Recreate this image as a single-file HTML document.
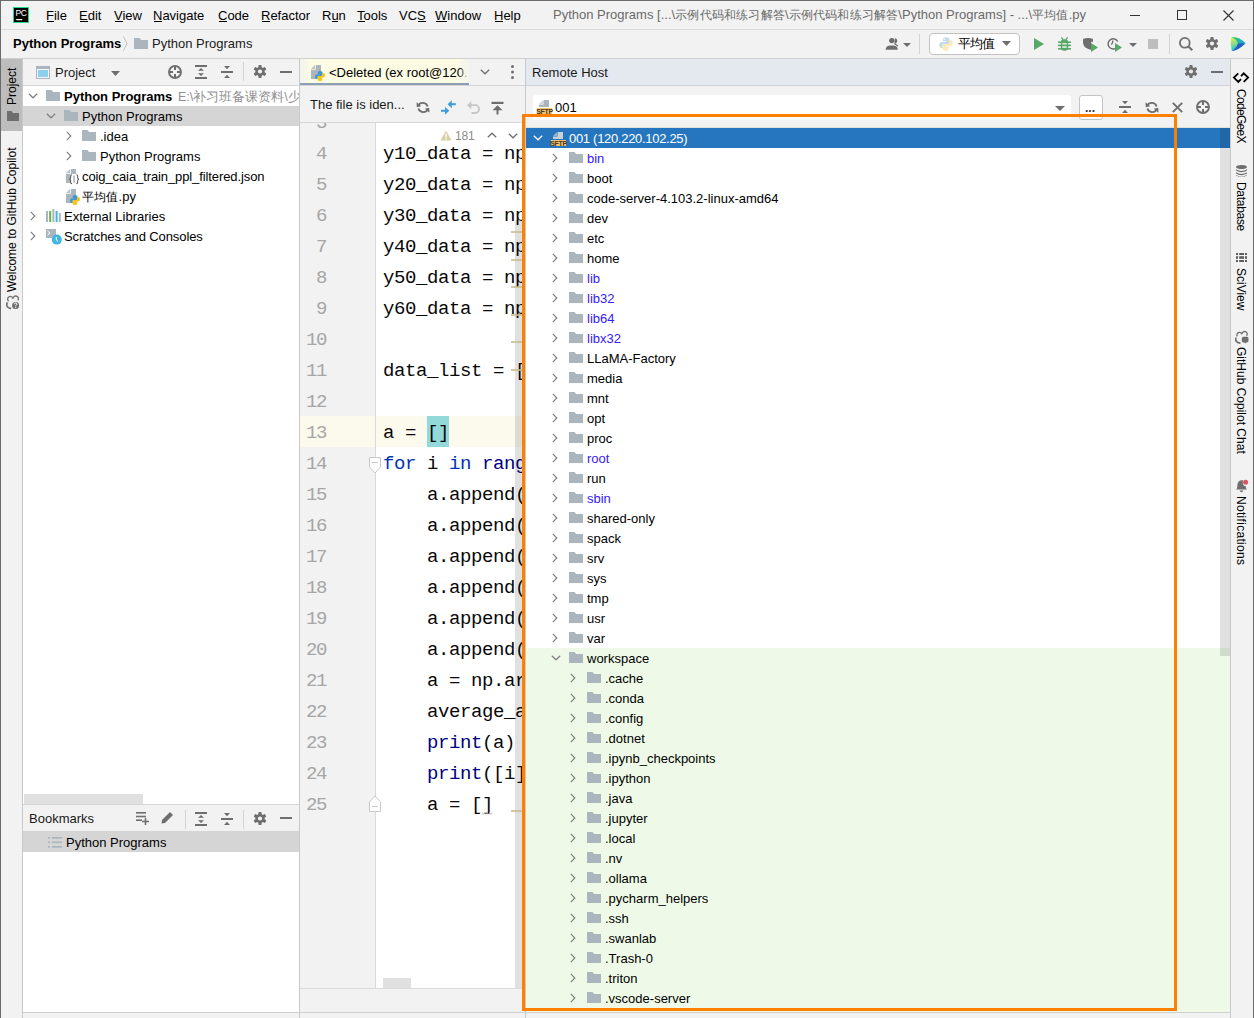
<!DOCTYPE html><html><head><meta charset="utf-8"><style>
*{margin:0;padding:0;box-sizing:border-box}
html,body{width:1254px;height:1018px;overflow:hidden;background:#f2f2f2}
body{position:relative;font-family:"Liberation Sans",sans-serif;font-size:13px;color:#000}
.t{position:absolute;white-space:nowrap}
.cj{font-size:12.2px;letter-spacing:0.2px}
svg{position:absolute;overflow:visible}
.code{position:absolute;font-family:"Liberation Mono",monospace;font-size:19px;letter-spacing:-0.4px;white-space:pre;height:31px;line-height:31px;color:#080808}
.ln{position:absolute;font-family:"Liberation Mono",monospace;font-size:19px;letter-spacing:-1.4px;white-space:pre;height:31px;line-height:31px;color:#a6a6a6;text-align:right;width:60px}
</style></head><body>
<div style="position:absolute;left:0px;top:0px;width:1254px;height:1px;background:#6b6b6b"></div>
<div style="position:absolute;left:0px;top:0px;width:1px;height:1018px;background:#6b6b6b"></div>
<div style="position:absolute;left:1253px;top:0px;width:1px;height:1018px;background:#6b6b6b"></div>
<div style="position:absolute;left:13px;top:7px;width:16px;height:16px;background:#21d789"></div>
<div style="position:absolute;left:14px;top:8px;width:14px;height:14px;background:#000"></div>
<svg style="position:absolute;left:15px;top:9px;" width="12" height="12" viewBox="0 0 12 12"><text x="0.6" y="7" font-size="8.6" fill="#fff" font-family="Liberation Sans" letter-spacing="-0.6">PC</text><rect x="1.2" y="10" width="6" height="1.2" fill="#fff"/></svg>
<div class="t" style="left:46px;top:5px;height:22px;line-height:22px;font-size:13px">File</div>
<div style="position:absolute;left:47px;top:21px;width:7px;height:1px;background:#000"></div>
<div class="t" style="left:79px;top:5px;height:22px;line-height:22px;font-size:13px">Edit</div>
<div style="position:absolute;left:80px;top:21px;width:8px;height:1px;background:#000"></div>
<div class="t" style="left:114px;top:5px;height:22px;line-height:22px;font-size:13px">View</div>
<div style="position:absolute;left:115px;top:21px;width:8px;height:1px;background:#000"></div>
<div class="t" style="left:153px;top:5px;height:22px;line-height:22px;font-size:13px">Navigate</div>
<div style="position:absolute;left:154px;top:21px;width:8px;height:1px;background:#000"></div>
<div class="t" style="left:218px;top:5px;height:22px;line-height:22px;font-size:13px">Code</div>
<div style="position:absolute;left:219px;top:21px;width:8px;height:1px;background:#000"></div>
<div class="t" style="left:261px;top:5px;height:22px;line-height:22px;font-size:13px">Refactor</div>
<div style="position:absolute;left:262px;top:21px;width:8px;height:1px;background:#000"></div>
<div class="t" style="left:322px;top:5px;height:22px;line-height:22px;font-size:13px">Run</div>
<div style="position:absolute;left:332px;top:21px;width:6px;height:1px;background:#000"></div>
<div class="t" style="left:357px;top:5px;height:22px;line-height:22px;font-size:13px">Tools</div>
<div style="position:absolute;left:358px;top:21px;width:7px;height:1px;background:#000"></div>
<div class="t" style="left:399px;top:5px;height:22px;line-height:22px;font-size:13px">VCS</div>
<div style="position:absolute;left:418px;top:21px;width:8px;height:1px;background:#000"></div>
<div class="t" style="left:435px;top:5px;height:22px;line-height:22px;font-size:13px">Window</div>
<div style="position:absolute;left:436px;top:21px;width:11px;height:1px;background:#000"></div>
<div class="t" style="left:494px;top:5px;height:22px;line-height:22px;font-size:13px">Help</div>
<div style="position:absolute;left:495px;top:21px;width:8px;height:1px;background:#000"></div>
<div class="t" style="left:553px;top:4px;height:22px;line-height:22px;color:#6a6a6a;font-size:13px">Python Programs [...\<span class="cj">示例代码和练习解答</span>\<span class="cj">示例代码和练习解答</span>\Python Programs] - ...\<span class="cj">平均值</span>.py</div>
<div style="position:absolute;left:1130px;top:15px;width:10px;height:1px;background:#333"></div>
<div style="position:absolute;left:1177px;top:10px;width:10px;height:10px;border:1px solid #333"></div>
<svg style="position:absolute;left:1223px;top:10px;" width="11" height="11" viewBox="0 0 11 11"><path d="M0.5 0.5L10.5 10.5M10.5 0.5L0.5 10.5" stroke="#333" stroke-width="1.1"/></svg>
<div style="position:absolute;left:1px;top:29px;width:1252px;height:1px;background:#dcdcdc"></div>
<div class="t" style="left:13px;top:33px;height:22px;line-height:22px;font-weight:bold;font-size:13px">Python Programs</div>
<svg style="position:absolute;left:123px;top:36px;" width="5" height="15" viewBox="0 0 5 15"><path d="M0.5 0.5L4 7.5L0.5 14.5" fill="none" stroke="#c4c4c4" stroke-width="1"/></svg>
<svg style="position:absolute;left:134px;top:38px;" width="14" height="11" viewBox="0 0 14 11"><path d="M0 0H5.5L7 2H14V11H0Z" fill="#aab5bd"/></svg>
<div class="t" style="left:152px;top:33px;height:22px;line-height:22px;font-size:13px;color:#1a1a1a">Python Programs</div>
<div style="position:absolute;left:1px;top:58px;width:1252px;height:1px;background:#d0d0d0"></div>
<svg style="position:absolute;left:885px;top:37px;" width="16" height="13" viewBox="0 0 16 13"><circle cx="6.8" cy="3.6" r="2.7" fill="#6e6e6e"/><path d="M6 1.5H7.6V5.5H6Z" fill="#6e6e6e"/><path d="M0.7 12.8C0.7 9.5 2.5 8.4 6.7 8.4S12.7 9.5 12.7 12.8Z" fill="#6e6e6e"/><path d="M10 1.2C11.5 1.2 12.2 2.4 12.2 3.8S11.6 6.4 10.3 6.6L13.5 8.8L12.5 9.5L9.3 7.2Z" fill="#6e6e6e"/></svg>
<svg style="position:absolute;left:903px;top:43px;" width="8" height="4" viewBox="0 0 8 4"><path d="M0 0H8L4 4Z" fill="#6e6e6e"/></svg>
<div style="position:absolute;left:919px;top:34px;width:1px;height:20px;background:#d4d4d4"></div>
<div style="position:absolute;left:929px;top:33px;width:91px;height:22px;background:#fff;border:1px solid #c2c2c2;border-radius:4px"></div>
<svg style="position:absolute;left:939px;top:37px;" width="14" height="14" viewBox="0 0 14 14"><path d="M7 0.3C4 0.3 4 1.6 4 2.8V4.3H7.3V4.9H2.6C1 4.9 0.2 6.2 0.2 7.9S1 11 2.6 11H3.8V9C3.8 7.8 4.8 6.9 6 6.9H9C10 6.9 10.6 6.2 10.6 5.3V2.8C10.6 1.3 9 0.3 7 0.3Z" fill="#c2dcef"/><path d="M7 13.7C10 13.7 10 12.4 10 11.2V9.7H6.7V9.1H11.4C13 9.1 13.8 7.8 13.8 6.1S13 3 11.4 3H10.2V5C10.2 6.2 9.2 7.1 8 7.1H5C4 7.1 3.4 7.8 3.4 8.7V11.2C3.4 12.7 5 13.7 7 13.7Z" fill="#fbeab8"/><circle cx="5.3" cy="2.2" r="0.7" fill="#fff"/><circle cx="8.7" cy="11.8" r="0.7" fill="#fff"/></svg>
<div class="t" style="left:958px;top:33px;height:22px;line-height:22px;font-size:13px;letter-spacing:-1px;color:#000">平均值</div>
<svg style="position:absolute;left:1002px;top:41px;" width="9" height="5" viewBox="0 0 9 5"><path d="M0 0H9L4.5 5Z" fill="#6e6e6e"/></svg>
<svg style="position:absolute;left:1034px;top:38px;" width="10" height="12" viewBox="0 0 10 12"><path d="M0 0L10 6L0 12Z" fill="#59a869"/></svg>
<svg style="position:absolute;left:1058px;top:37px;" width="13" height="14" viewBox="0 0 13 14"><path d="M3.4 0.4L5.2 2.8M9.6 0.4L7.8 2.8" stroke="#59a869" stroke-width="1.4"/><rect x="2.8" y="2.3" width="7.4" height="11.5" rx="3.3" fill="#59a869"/><rect x="0" y="4.4" width="13" height="1.6" fill="#59a869"/><rect x="0" y="7.6" width="13" height="1.6" fill="#59a869"/><rect x="0" y="11" width="13" height="1.6" fill="#59a869"/><rect x="4.3" y="6.1" width="4.4" height="1.4" fill="#f2f2f2"/><rect x="4.3" y="9.3" width="4.4" height="1.5" fill="#f2f2f2"/></svg>
<svg style="position:absolute;left:1083px;top:38px;" width="16" height="15" viewBox="0 0 16 15"><path d="M0 1Q5 -0.8 10 1V3.8H8.2V10.5L9 11.6Q6.5 12 4.2 10.6Q0 8.5 0 4Z" fill="#6e6e6e"/><path d="M8 5L15 9.5L8 14Z" fill="#59a869"/></svg>
<svg style="position:absolute;left:1106px;top:37px;" width="17" height="15" viewBox="0 0 17 15"><path d="M10.5 10.8A5.1 5.1 0 1 1 11.7 4.5" fill="none" stroke="#6e6e6e" stroke-width="1.5"/><path d="M6.8 3.5L6.6 5.5L5.4 7.6" fill="none" stroke="#6e6e6e" stroke-width="1.3"/><path d="M9 6L16 10.4L9 15Z" fill="#59a869"/></svg>
<svg style="position:absolute;left:1129px;top:43px;" width="8" height="4" viewBox="0 0 8 4"><path d="M0 0H8L4 4Z" fill="#6e6e6e"/></svg>
<div style="position:absolute;left:1148px;top:39px;width:10px;height:10px;background:#bdbdbd"></div>
<div style="position:absolute;left:1169px;top:34px;width:1px;height:20px;background:#d4d4d4"></div>
<svg style="position:absolute;left:1178px;top:36px;" width="16" height="16" viewBox="0 0 16 16"><circle cx="6.8" cy="6.8" r="4.9" fill="none" stroke="#6e6e6e" stroke-width="1.8"/><path d="M10.2 10.2L14.3 14.3" stroke="#6e6e6e" stroke-width="2"/></svg>
<svg style="position:absolute;left:1206px;top:37px;" width="12" height="13" viewBox="0 0 12 13"><g transform="translate(6,6.5)" fill="#6e6e6e"><rect x="-1.6" y="-6.5" width="3.2" height="4" rx="0.8" transform="rotate(0)"/><rect x="-1.6" y="-6.5" width="3.2" height="4" rx="0.8" transform="rotate(60)"/><rect x="-1.6" y="-6.5" width="3.2" height="4" rx="0.8" transform="rotate(120)"/><rect x="-1.6" y="-6.5" width="3.2" height="4" rx="0.8" transform="rotate(180)"/><rect x="-1.6" y="-6.5" width="3.2" height="4" rx="0.8" transform="rotate(240)"/><rect x="-1.6" y="-6.5" width="3.2" height="4" rx="0.8" transform="rotate(300)"/><circle r="4.6"/></g><circle cx="6" cy="6.5" r="2.1" fill="#f2f2f2"/></svg>
<svg style="position:absolute;left:1230px;top:36px;" width="16" height="16" viewBox="0 0 16 16"><defs><linearGradient id="lgA" x1="0" y1="0" x2="0.3" y2="1"><stop offset="0" stop-color="#f3f03c"/><stop offset="0.55" stop-color="#7fdc8c"/><stop offset="1" stop-color="#16b4e6"/></linearGradient><linearGradient id="lgB" x1="0" y1="0" x2="1" y2="1"><stop offset="0" stop-color="#22d27a"/><stop offset="1" stop-color="#1d9fe0"/></linearGradient></defs><path d="M1.2 1.2Q8 0 15.5 7.2Q8 14 1.8 15Q0 8 1.2 1.2Z" fill="url(#lgA)"/><path d="M1.8 1Q9 0.5 15.5 7.2L8 7.2Q6 3 1.8 1Z" fill="url(#lgB)"/><path d="M15.5 7.2Q9 14 1.8 15Q6.5 12 8 7.2Z" fill="#1f5fc4"/></svg>
<div style="position:absolute;left:1px;top:59px;width:21px;height:959px;background:#f2f2f2"></div>
<div style="position:absolute;left:1px;top:59px;width:21px;height:72px;background:#bdbdbd"></div>
<div style="position:absolute;left:22px;top:58px;width:1px;height:960px;background:#c9c9c9"></div>
<div class="t" style="left:5px;top:60px;height:15px;line-height:15px;font-size:12px;transform-origin:0 0;transform:translate(0px,45px) rotate(-90deg);">Project</div>
<svg style="position:absolute;left:7px;top:111px;" width="12" height="10" viewBox="0 0 12 10"><path d="M0 0H4.5L6 2H12V10H0Z" fill="#6e6e6e"/></svg>
<div class="t" style="left:5px;top:292px;height:15px;line-height:15px;font-size:12px;transform-origin:0 0;transform:rotate(-90deg);">Welcome to GitHub Copilot</div>
<svg style="position:absolute;left:6px;top:296px;" width="14" height="14" viewBox="0 0 14 14"><path d="M2.6 5.2A2.7 2.7 0 1 1 7 2.8A2.7 2.7 0 1 1 11.8 4.4" fill="none" stroke="#6e6e6e" stroke-width="1.3"/><path d="M1.3 6.4Q-0.3 10.2 2.5 11.6Q3.8 12.3 5.2 12.6" fill="none" stroke="#6e6e6e" stroke-width="1.6"/><circle cx="9.6" cy="9.4" r="3.5" fill="#6e6e6e"/><path d="M8.3 8.3Q8.4 7 9.6 7Q10.9 7 10.9 8.2Q10.9 9 9.7 9.5V10.3" fill="none" stroke="#fff" stroke-width="1"/><rect x="9.2" y="11" width="1" height="1" fill="#fff"/></svg>
<div style="position:absolute;left:23px;top:59px;width:276px;height:26px;background:#f2f2f2"></div>
<div style="position:absolute;left:23px;top:85px;width:276px;height:1px;background:#d6d6d6"></div>
<div style="position:absolute;left:23px;top:86px;width:276px;height:718px;background:#fff"></div>
<svg style="position:absolute;left:36px;top:66px;" width="14" height="13" viewBox="0 0 14 13"><rect x="0.5" y="0.5" width="13" height="12" fill="#f4f6f7" stroke="#aab5bd"/><rect x="0" y="0" width="14" height="3" fill="#aab5bd"/><rect x="2" y="4" width="10" height="7" fill="#8cd0ee"/></svg>
<div class="t" style="left:55px;top:63px;height:20px;line-height:20px;font-size:13px;color:#1a1a1a">Project</div>
<svg style="position:absolute;left:111px;top:71px;" width="9" height="5" viewBox="0 0 9 5"><path d="M0 0H9L4.5 5Z" fill="#6e6e6e"/></svg>
<svg style="position:absolute;left:168px;top:65px;" width="14" height="14" viewBox="0 0 14 14"><circle cx="7" cy="7" r="6" fill="none" stroke="#6e6e6e" stroke-width="1.9"/><path d="M7 1V5M7 9V13M1 7H5M9 7H13" stroke="#6e6e6e" stroke-width="2"/></svg>
<svg style="position:absolute;left:195px;top:65px;" width="12" height="14" viewBox="0 0 12 14"><rect x="0" y="0" width="12" height="2" fill="#6e6e6e"/><rect x="0" y="12" width="12" height="2" fill="#6e6e6e"/><path d="M3 5.8H9L6 3Z M3 8.2H9L6 11Z" fill="#6e6e6e"/></svg>
<svg style="position:absolute;left:221px;top:65px;" width="12" height="14" viewBox="0 0 12 14"><rect x="0" y="6" width="12" height="2" fill="#6e6e6e"/><path d="M3 1H9L6 4.2Z M3 13H9L6 9.8Z" fill="#6e6e6e"/></svg>
<div style="position:absolute;left:243px;top:62px;width:1px;height:19px;background:#d4d4d4"></div>
<svg style="position:absolute;left:254px;top:65px;" width="12" height="13" viewBox="0 0 12 13"><g transform="translate(6,6.5)" fill="#6e6e6e"><rect x="-1.6" y="-6.5" width="3.2" height="4" rx="0.8" transform="rotate(0)"/><rect x="-1.6" y="-6.5" width="3.2" height="4" rx="0.8" transform="rotate(60)"/><rect x="-1.6" y="-6.5" width="3.2" height="4" rx="0.8" transform="rotate(120)"/><rect x="-1.6" y="-6.5" width="3.2" height="4" rx="0.8" transform="rotate(180)"/><rect x="-1.6" y="-6.5" width="3.2" height="4" rx="0.8" transform="rotate(240)"/><rect x="-1.6" y="-6.5" width="3.2" height="4" rx="0.8" transform="rotate(300)"/><circle r="4.6"/></g><circle cx="6" cy="6.5" r="2.1" fill="#f2f2f2"/></svg>
<div style="position:absolute;left:280px;top:71px;width:12px;height:2px;background:#6e6e6e"></div>
<div style="position:absolute;left:299px;top:58px;width:1px;height:960px;background:#c9c9c9"></div>
<svg style="position:absolute;left:28px;top:93px;" width="10" height="6" viewBox="0 0 10 6"><path d="M0.8 0.8L5 4.8L9.2 0.8" fill="none" stroke="#808080" stroke-width="1.2"/></svg><svg style="position:absolute;left:46px;top:90px;" width="14" height="11" viewBox="0 0 14 11"><path d="M0 0H5.5L7 2H14V11H0Z" fill="#aab5bd"/></svg><div class="t" style="left:64px;top:87px;height:20px;line-height:20px;"><b>Python Programs</b></div>
<div class="t" style="left:178px;top:87px;height:20px;line-height:20px;width:121px;overflow:hidden;font-size:12.5px;color:#8f8f8f">E:\补习班备课资料\少儿编程</div>
<div style="position:absolute;left:23px;top:106px;width:276px;height:20px;background:#d5d5d5"></div><svg style="position:absolute;left:46px;top:113px;" width="10" height="6" viewBox="0 0 10 6"><path d="M0.8 0.8L5 4.8L9.2 0.8" fill="none" stroke="#808080" stroke-width="1.2"/></svg><svg style="position:absolute;left:64px;top:110px;" width="14" height="11" viewBox="0 0 14 11"><path d="M0 0H5.5L7 2H14V11H0Z" fill="#aab5bd"/></svg><div class="t" style="left:82px;top:107px;height:20px;line-height:20px;">Python Programs</div>
<svg style="position:absolute;left:66px;top:131px;" width="6" height="10" viewBox="0 0 6 10"><path d="M0.8 0.8L4.8 5L0.8 9.2" fill="none" stroke="#808080" stroke-width="1.2"/></svg><svg style="position:absolute;left:82px;top:130px;" width="14" height="11" viewBox="0 0 14 11"><path d="M0 0H5.5L7 2H14V11H0Z" fill="#aab5bd"/></svg><div class="t" style="left:100px;top:127px;height:20px;line-height:20px;">.idea</div>
<svg style="position:absolute;left:66px;top:151px;" width="6" height="10" viewBox="0 0 6 10"><path d="M0.8 0.8L4.8 5L0.8 9.2" fill="none" stroke="#808080" stroke-width="1.2"/></svg><svg style="position:absolute;left:82px;top:150px;" width="14" height="11" viewBox="0 0 14 11"><path d="M0 0H5.5L7 2H14V11H0Z" fill="#aab5bd"/></svg><div class="t" style="left:100px;top:147px;height:20px;line-height:20px;">Python Programs</div>
<div class="t" style="left:82px;top:167px;height:20px;line-height:20px;"><span style="letter-spacing:-0.1px">coig_caia_train_ppl_filtered.json</span></div>
<div class="t" style="left:82px;top:187px;height:20px;line-height:20px;"><span class="cj">平均值</span>.py</div>
<svg style="position:absolute;left:30px;top:211px;" width="6" height="10" viewBox="0 0 6 10"><path d="M0.8 0.8L4.8 5L0.8 9.2" fill="none" stroke="#808080" stroke-width="1.2"/></svg><div class="t" style="left:64px;top:207px;height:20px;line-height:20px;">External Libraries</div>
<svg style="position:absolute;left:30px;top:231px;" width="6" height="10" viewBox="0 0 6 10"><path d="M0.8 0.8L4.8 5L0.8 9.2" fill="none" stroke="#808080" stroke-width="1.2"/></svg><div class="t" style="left:64px;top:227px;height:20px;line-height:20px;"><span style="letter-spacing:-0.1px">Scratches and Consoles</span></div>
<svg style="position:absolute;left:66px;top:169px;" width="10" height="14" viewBox="0 0 10 14"><path d="M4.8 0H10V14H0V4.8H4.8Z" fill="#aab5bd"/><path d="M0 4L4 0V4Z" fill="#b9c3c9"/></svg>
<svg style="position:absolute;left:69px;top:174px;" width="11" height="11" viewBox="0 0 11 11"><rect x="1" y="0" width="8.5" height="10.5" fill="#fff"/><rect x="4.3" y="1.5" width="1.6" height="7" fill="#aab5bd"/><path d="M3 0.8Q1.6 0.8 1.6 2.2V3.8Q1.6 5 0.3 5.2Q1.6 5.4 1.6 6.6V8.2Q1.6 9.6 3 9.6M7.3 0.8Q8.7 0.8 8.7 2.2V3.8Q8.7 5 10 5.2Q8.7 5.4 8.7 6.6V8.2Q8.7 9.6 7.3 9.6" fill="none" stroke="#5e5e5e" stroke-width="1.1"/></svg>
<svg style="position:absolute;left:66px;top:189px;" width="10" height="14" viewBox="0 0 10 14"><path d="M4.8 0H10V14H0V4.8H4.8Z" fill="#aab5bd"/><path d="M0 4L4 0V4Z" fill="#b9c3c9"/></svg>
<svg style="position:absolute;left:70px;top:195px;" width="10" height="10" viewBox="0 0 10 10"><g transform="scale(1.0)"><path d="M5 0C2.8 0 2.8 1 2.8 2V3.2H5.2V3.6H1.8C0.7 3.6 0 4.5 0 5.8S0.7 8 1.8 8H2.8V6.5C2.8 5.6 3.5 5 4.3 5H6.5C7.2 5 7.6 4.5 7.6 3.9V2C7.6 0.9 6.5 0 5 0Z" fill="#3b98d4"/><path d="M5 10C7.2 10 7.2 9 7.2 8V6.8H4.8V6.4H8.2C9.3 6.4 10 5.5 10 4.2S9.3 2 8.2 2H7.2V3.5C7.2 4.4 6.5 5 5.7 5H3.5C2.8 5 2.4 5.5 2.4 6.1V8C2.4 9.1 3.5 10 5 10Z" fill="#f5c518"/></g></svg>
<svg style="position:absolute;left:46px;top:209px;" width="15" height="13" viewBox="0 0 15 13"><rect x="0" y="2" width="2" height="11" fill="#aab5bd"/><rect x="3.2" y="2" width="2" height="11" fill="#62b543"/><rect x="6.4" y="0" width="2" height="13" fill="#aab5bd"/><rect x="9.6" y="2" width="2" height="11" fill="#40b6e0"/><rect x="12.8" y="4" width="2" height="9" fill="#aab5bd"/></svg>
<svg style="position:absolute;left:46px;top:229px;" width="16" height="16" viewBox="0 0 16 16"><rect x="0" y="0" width="10" height="9" fill="#aab5bd"/><path d="M1.5 2L4 4L1.5 6" fill="none" stroke="#fff" stroke-width="1"/><circle cx="10.8" cy="10.6" r="5" fill="#40b6e0"/><path d="M10.3 8V11L12 12.5" fill="none" stroke="#fff" stroke-width="1"/></svg>
<div style="position:absolute;left:24px;top:794px;width:119px;height:10px;background:#e0e0e0"></div>
<div style="position:absolute;left:23px;top:804px;width:276px;height:1px;background:#d6d6d6"></div>
<div style="position:absolute;left:23px;top:805px;width:276px;height:26px;background:#f2f2f2"></div>
<div class="t" style="left:29px;top:809px;height:20px;line-height:20px;font-size:13px;color:#1a1a1a">Bookmarks</div>
<svg style="position:absolute;left:136px;top:812px;" width="14" height="14" viewBox="0 0 14 14"><rect x="0" y="0" width="10" height="1.6" fill="#6e6e6e"/><rect x="0" y="3.7" width="10" height="1.6" fill="#6e6e6e"/><rect x="0" y="7.4" width="6" height="1.6" fill="#6e6e6e"/><path d="M9.5 6V13M6 9.5H13" stroke="#6e6e6e" stroke-width="1.6"/></svg>
<svg style="position:absolute;left:161px;top:811px;" width="13" height="13" viewBox="0 0 13 13"><path d="M0.5 12.5L1 9L9 1L12 4L4 12Z" fill="#6e6e6e"/></svg>
<div style="position:absolute;left:185px;top:810px;width:1px;height:19px;background:#d4d4d4"></div>
<svg style="position:absolute;left:195px;top:812px;" width="12" height="14" viewBox="0 0 12 14"><rect x="0" y="0" width="12" height="2" fill="#6e6e6e"/><rect x="0" y="12" width="12" height="2" fill="#6e6e6e"/><path d="M3 5.8H9L6 3Z M3 8.2H9L6 11Z" fill="#6e6e6e"/></svg>
<svg style="position:absolute;left:221px;top:812px;" width="12" height="14" viewBox="0 0 12 14"><rect x="0" y="6" width="12" height="2" fill="#6e6e6e"/><path d="M3 1H9L6 4.2Z M3 13H9L6 9.8Z" fill="#6e6e6e"/></svg>
<div style="position:absolute;left:243px;top:810px;width:1px;height:19px;background:#d4d4d4"></div>
<svg style="position:absolute;left:254px;top:812px;" width="12" height="13" viewBox="0 0 12 13"><g transform="translate(6,6.5)" fill="#6e6e6e"><rect x="-1.6" y="-6.5" width="3.2" height="4" rx="0.8" transform="rotate(0)"/><rect x="-1.6" y="-6.5" width="3.2" height="4" rx="0.8" transform="rotate(60)"/><rect x="-1.6" y="-6.5" width="3.2" height="4" rx="0.8" transform="rotate(120)"/><rect x="-1.6" y="-6.5" width="3.2" height="4" rx="0.8" transform="rotate(180)"/><rect x="-1.6" y="-6.5" width="3.2" height="4" rx="0.8" transform="rotate(240)"/><rect x="-1.6" y="-6.5" width="3.2" height="4" rx="0.8" transform="rotate(300)"/><circle r="4.6"/></g><circle cx="6" cy="6.5" r="2.1" fill="#f2f2f2"/></svg>
<div style="position:absolute;left:280px;top:817px;width:12px;height:2px;background:#6e6e6e"></div>
<div style="position:absolute;left:23px;top:831px;width:276px;height:1px;background:#ececec"></div>
<div style="position:absolute;left:23px;top:832px;width:276px;height:180px;background:#fff"></div>
<div style="position:absolute;left:23px;top:831px;width:276px;height:21px;background:#d5d5d5"></div>
<svg style="position:absolute;left:48px;top:837px;" width="14" height="11" viewBox="0 0 14 11"><g fill="#aab5bd"><rect x="0" y="0" width="2" height="1.6"/><rect x="0" y="4.5" width="2" height="1.6"/><rect x="0" y="9" width="2" height="1.6"/><rect x="4" y="0" width="10" height="1.6"/><rect x="4" y="4.5" width="10" height="1.6"/><rect x="4" y="9" width="10" height="1.6"/></g></svg>
<div class="t" style="left:66px;top:833px;height:20px;line-height:20px;font-size:13px">Python Programs</div>
<div style="position:absolute;left:23px;top:1012px;width:1230px;height:1px;background:#d0d0d0"></div>
<div style="position:absolute;left:300px;top:59px;width:225px;height:26px;background:#f2f2f2"></div>
<div style="position:absolute;left:300px;top:59px;width:169px;height:24px;background:linear-gradient(to right,#f2f2f2 0px,#fcfbe3 10px,#fcfbe3 158px,#f2f2f2 169px)"></div>
<div style="position:absolute;left:300px;top:83px;width:169px;height:2px;background:#8d9db3"></div>
<div style="position:absolute;left:300px;top:85px;width:225px;height:1px;background:#d6d6d6"></div>
<svg style="position:absolute;left:311px;top:65px;" width="10" height="14" viewBox="0 0 10 14"><path d="M4.8 0H10V14H0V4.8H4.8Z" fill="#aab5bd"/><path d="M0 4L4 0V4Z" fill="#b9c3c9"/></svg>
<svg style="position:absolute;left:315px;top:71px;" width="10" height="10" viewBox="0 0 10 10"><g transform="scale(1.0)"><path d="M5 0C2.8 0 2.8 1 2.8 2V3.2H5.2V3.6H1.8C0.7 3.6 0 4.5 0 5.8S0.7 8 1.8 8H2.8V6.5C2.8 5.6 3.5 5 4.3 5H6.5C7.2 5 7.6 4.5 7.6 3.9V2C7.6 0.9 6.5 0 5 0Z" fill="#3b98d4"/><path d="M5 10C7.2 10 7.2 9 7.2 8V6.8H4.8V6.4H8.2C9.3 6.4 10 5.5 10 4.2S9.3 2 8.2 2H7.2V3.5C7.2 4.4 6.5 5 5.7 5H3.5C2.8 5 2.4 5.5 2.4 6.1V8C2.4 9.1 3.5 10 5 10Z" fill="#f5c518"/></g></svg>
<div class="t" style="left:329px;top:63px;height:20px;line-height:20px;width:139px;overflow:hidden;font-size:13px;color:#000">&lt;Deleted (ex root@120.220.102.25)</div>
<div style="position:absolute;left:459px;top:63px;width:10px;height:20px;background:linear-gradient(to right,rgba(250,249,228,0),#f6f6e9 100%)"></div>
<svg style="position:absolute;left:480px;top:69px;" width="10" height="6" viewBox="0 0 10 6"><path d="M0.8 0.8L5 4.8L9.2 0.8" fill="none" stroke="#6e6e6e" stroke-width="1.3"/></svg>
<svg style="position:absolute;left:511px;top:65px;" width="3" height="14" viewBox="0 0 3 14"><circle cx="1.5" cy="1.5" r="1.5" fill="#6e6e6e"/><circle cx="1.5" cy="7" r="1.5" fill="#6e6e6e"/><circle cx="1.5" cy="12.5" r="1.5" fill="#6e6e6e"/></svg>
<div style="position:absolute;left:300px;top:86px;width:225px;height:36px;background:#f2f2f2"></div>
<div class="t" style="left:310px;top:95px;height:20px;line-height:20px;font-size:13px;color:#1a1a1a">The file is iden...</div>
<svg style="position:absolute;left:416px;top:101px;" width="14" height="13" viewBox="0 0 14 13"><path d="M2.3 4.6A5 5 0 0 1 11.6 5.4M11.7 8.4A5 5 0 0 1 2.4 7.6" fill="none" stroke="#6e6e6e" stroke-width="1.8"/><path d="M0.5 1.2L0.8 6.3L5.2 5.2Z M13.5 11.8L13.2 6.7L8.8 7.8Z" fill="#6e6e6e"/></svg>
<svg style="position:absolute;left:441px;top:100px;" width="15" height="15" viewBox="0 0 15 15"><g fill="#3f9ddb"><rect x="0" y="9.8" width="5" height="2"/><path d="M4 6.8L8.3 10.8L4 14.8Z"/><rect x="9.8" y="3.2" width="5" height="2"/><path d="M10.8 0.2L6.5 4.2L10.8 8.2Z"/></g></svg>
<svg style="position:absolute;left:467px;top:101px;" width="14" height="13" viewBox="0 0 14 13"><path d="M3.5 4.2H8.2A3.9 3.9 0 0 1 8.2 12H4.5" fill="none" stroke="#c6c6c6" stroke-width="1.8"/><path d="M0 4.2L4.3 0.2V8.2Z" fill="#c6c6c6"/></svg>
<svg style="position:absolute;left:491px;top:101px;" width="13" height="14" viewBox="0 0 13 14"><rect x="0.5" y="0.8" width="12" height="2.2" fill="#6e6e6e"/><rect x="5.5" y="7" width="2" height="6.5" fill="#6e6e6e"/><path d="M1.5 9.3L6.5 4.3L11.5 9.3Z" fill="#6e6e6e"/></svg>
<div style="position:absolute;left:300px;top:122px;width:225px;height:1px;background:#d6d6d6"></div>
<div style="position:absolute;left:300px;top:123px;width:76px;height:865px;background:#f2f2f2"></div>
<div style="position:absolute;left:375px;top:123px;width:1px;height:865px;background:#d9d9d9"></div>
<div style="position:absolute;left:376px;top:123px;width:146px;height:865px;background:#fff"></div>
<div style="position:absolute;left:300px;top:988px;width:222px;height:24px;background:#f2f2f2"></div>
<div style="position:absolute;left:300px;top:416px;width:76px;height:31px;background:#fcfaed"></div>
<div style="position:absolute;left:376px;top:416px;width:146px;height:31px;background:#fcfaed"></div>
<div style="position:absolute;left:427px;top:416px;width:22px;height:31px;background:#93d9d9"></div>
<div style="position:absolute;left:375px;top:416px;width:1px;height:31px;background:#d9d9d9"></div>
<div style="position:absolute;left:300px;top:123px;width:222px;height:865px;overflow:hidden"><div style="position:absolute;left:-300px;top:-123px;width:1254px;height:1018px"><div class="ln" style="left:266px;top:107.5px;">3</div><div class="code" style="left:383px;top:107.5px;"></div><div class="ln" style="left:266px;top:138.5px;">4</div><div class="code" style="left:383px;top:138.5px;">y10_data = np.array</div><div class="ln" style="left:266px;top:169.5px;">5</div><div class="code" style="left:383px;top:169.5px;">y20_data = np.array</div><div class="ln" style="left:266px;top:200.5px;">6</div><div class="code" style="left:383px;top:200.5px;">y30_data = np.array</div><div class="ln" style="left:266px;top:231.5px;">7</div><div class="code" style="left:383px;top:231.5px;">y40_data = np.array</div><div class="ln" style="left:266px;top:262.5px;">8</div><div class="code" style="left:383px;top:262.5px;">y50_data = np.array</div><div class="ln" style="left:266px;top:293.5px;">9</div><div class="code" style="left:383px;top:293.5px;">y60_data = np.array</div><div class="ln" style="left:266px;top:324.5px;">10</div><div class="code" style="left:383px;top:324.5px;"></div><div class="ln" style="left:266px;top:355.5px;">11</div><div class="code" style="left:383px;top:355.5px;">data_list = [y10</div><div class="ln" style="left:266px;top:386.5px;">12</div><div class="code" style="left:383px;top:386.5px;"></div><div class="ln" style="left:266px;top:417.5px;">13</div><div class="code" style="left:383px;top:417.5px;">a = []</div><div class="ln" style="left:266px;top:448.5px;">14</div><div class="code" style="left:383px;top:448.5px;"><span style="color:#0033b3">for</span> i <span style="color:#0033b3">in</span> <span style="color:#000080">range</span>(</div><div class="ln" style="left:266px;top:479.5px;">15</div><div class="code" style="left:383px;top:479.5px;">    a.append(</div><div class="ln" style="left:266px;top:510.5px;">16</div><div class="code" style="left:383px;top:510.5px;">    a.append(</div><div class="ln" style="left:266px;top:541.5px;">17</div><div class="code" style="left:383px;top:541.5px;">    a.append(</div><div class="ln" style="left:266px;top:572.5px;">18</div><div class="code" style="left:383px;top:572.5px;">    a.append(</div><div class="ln" style="left:266px;top:603.5px;">19</div><div class="code" style="left:383px;top:603.5px;">    a.append(</div><div class="ln" style="left:266px;top:634.5px;">20</div><div class="code" style="left:383px;top:634.5px;">    a.append(</div><div class="ln" style="left:266px;top:665.5px;">21</div><div class="code" style="left:383px;top:665.5px;">    a = np.array</div><div class="ln" style="left:266px;top:696.5px;">22</div><div class="code" style="left:383px;top:696.5px;">    average_a</div><div class="ln" style="left:266px;top:727.5px;">23</div><div class="code" style="left:383px;top:727.5px;">    <span style="color:#000080">print</span>(a)</div><div class="ln" style="left:266px;top:758.5px;">24</div><div class="code" style="left:383px;top:758.5px;">    <span style="color:#000080">print</span>([i]</div><div class="ln" style="left:266px;top:789.5px;">25</div><div class="code" style="left:383px;top:789.5px;">    a = []</div></div></div>
<div style="position:absolute;left:376px;top:125px;width:140px;height:20px;background:#fff"></div>
<svg style="position:absolute;left:440px;top:130px;" width="12" height="11" viewBox="0 0 12 11"><path d="M6 0.5L11.5 10.5H0.5Z" fill="#d9cfa5"/><rect x="5.3" y="3.5" width="1.4" height="4" fill="#fff"/><rect x="5.3" y="8.3" width="1.4" height="1.4" fill="#fff"/></svg>
<div class="t" style="left:455px;top:126px;height:20px;line-height:20px;font-size:12px;color:#8a8a8a;letter-spacing:-0.2px">181</div>
<svg style="position:absolute;left:487px;top:132px;" width="10" height="6" viewBox="0 0 10 6"><path d="M0.8 5.2L5 1.2L9.2 5.2" fill="none" stroke="#6e6e6e" stroke-width="1.2"/></svg>
<svg style="position:absolute;left:508px;top:133px;" width="10" height="6" viewBox="0 0 10 6"><path d="M0.8 0.8L5 4.8L9.2 0.8" fill="none" stroke="#6e6e6e" stroke-width="1.2"/></svg>
<svg style="position:absolute;left:369px;top:457px;" width="12" height="17" viewBox="0 0 12 17"><path d="M0.5 0.5H11.5V10L6 16L0.5 10Z" fill="#fff" stroke="#c9c9c9"/><path d="M3 5.5H9" stroke="#c9c9c9"/></svg>
<svg style="position:absolute;left:369px;top:795px;" width="12" height="17" viewBox="0 0 12 17"><path d="M0.5 16.5H11.5V7L6 1L0.5 7Z" fill="#fff" stroke="#c9c9c9"/><path d="M3 11.5H9" stroke="#c9c9c9"/></svg>
<div style="position:absolute;left:515px;top:220px;width:7px;height:768px;background:rgba(0,0,0,0.12)"></div>
<div style="position:absolute;left:511px;top:231px;width:11px;height:2px;background:rgba(200,188,140,0.8)"></div>
<div style="position:absolute;left:511px;top:259px;width:11px;height:2px;background:rgba(200,188,140,0.8)"></div>
<div style="position:absolute;left:511px;top:286px;width:11px;height:2px;background:rgba(200,188,140,0.8)"></div>
<div style="position:absolute;left:511px;top:314px;width:11px;height:2px;background:rgba(200,188,140,0.8)"></div>
<div style="position:absolute;left:511px;top:341px;width:11px;height:2px;background:rgba(200,188,140,0.8)"></div>
<div style="position:absolute;left:511px;top:369px;width:11px;height:2px;background:rgba(200,188,140,0.8)"></div>
<div style="position:absolute;left:383px;top:978px;width:28px;height:10px;background:#e0e0e0"></div>
<div style="position:absolute;left:300px;top:988px;width:222px;height:1px;background:#dadada"></div>
<svg style="position:absolute;left:482px;top:812px;" width="10" height="3" viewBox="0 0 10 3"><path d="M0 0.5L1.25 2.5L2.5 0.5L3.75 2.5L5 0.5L6.25 2.5L7.5 0.5L8.75 2.5L10 0.5" fill="none" stroke="#b8b8b8" stroke-width="0.8"/></svg>
<div style="position:absolute;left:511px;top:810px;width:11px;height:2px;background:rgba(200,188,140,0.8)"></div>
<div style="position:absolute;left:525px;top:58px;width:1px;height:960px;background:#c9c9c9"></div>
<div style="position:absolute;left:526px;top:59px;width:704px;height:26px;background:#e4e8ef"></div>
<div style="position:absolute;left:526px;top:85px;width:704px;height:1px;background:#d0d3d9"></div>
<div class="t" style="left:532px;top:63px;height:20px;line-height:20px;font-size:13px;color:#1a1a1a">Remote Host</div>
<svg style="position:absolute;left:1185px;top:65px;" width="12" height="13" viewBox="0 0 12 13"><g transform="translate(6,6.5)" fill="#6e6e6e"><rect x="-1.6" y="-6.5" width="3.2" height="4" rx="0.8" transform="rotate(0)"/><rect x="-1.6" y="-6.5" width="3.2" height="4" rx="0.8" transform="rotate(60)"/><rect x="-1.6" y="-6.5" width="3.2" height="4" rx="0.8" transform="rotate(120)"/><rect x="-1.6" y="-6.5" width="3.2" height="4" rx="0.8" transform="rotate(180)"/><rect x="-1.6" y="-6.5" width="3.2" height="4" rx="0.8" transform="rotate(240)"/><rect x="-1.6" y="-6.5" width="3.2" height="4" rx="0.8" transform="rotate(300)"/><circle r="4.6"/></g><circle cx="6" cy="6.5" r="2.1" fill="#e4e8ef"/></svg>
<div style="position:absolute;left:1211px;top:71px;width:12px;height:2px;background:#6e6e6e"></div>
<div style="position:absolute;left:526px;top:86px;width:704px;height:42px;background:#f2f2f2"></div>
<div style="position:absolute;left:533px;top:95px;width:538px;height:25px;background:#fff;border-radius:3px"></div>
<svg style="position:absolute;left:537px;top:99px;" width="16" height="15" viewBox="0 0 16 15"><path d="M6.5 1H12V8H2V5.5H6.5Z" fill="#aab5bd"/><path d="M2 5L6 1V5Z" fill="#cdd5da"/><rect x="0" y="9" width="15" height="6" fill="#f2c06e"/><text x="7.5" y="14.6" font-size="7" text-anchor="middle" fill="#4a3a20" font-family="Liberation Sans" font-weight="bold" letter-spacing="-0.3">SFTP</text></svg>
<div class="t" style="left:555px;top:98px;height:20px;line-height:20px;font-size:13px">001</div>
<svg style="position:absolute;left:1055px;top:106px;" width="10" height="5" viewBox="0 0 10 5"><path d="M0 0H10L5 5Z" fill="#6e6e6e"/></svg>
<div style="position:absolute;left:1079px;top:95px;width:24px;height:25px;background:#fff;border:1px solid #c4c4c4;border-radius:3px"></div>
<div class="t" style="left:1085px;top:98px;height:20px;line-height:20px;font-size:12px;font-weight:bold;color:#333">...</div>
<svg style="position:absolute;left:1119px;top:100px;" width="12" height="14" viewBox="0 0 12 14"><rect x="0" y="6" width="12" height="2" fill="#6e6e6e"/><path d="M3 1H9L6 4.2Z M3 13H9L6 9.8Z" fill="#6e6e6e"/></svg>
<svg style="position:absolute;left:1145px;top:101px;" width="14" height="13" viewBox="0 0 14 13"><path d="M2.3 4.6A5 5 0 0 1 11.6 5.4M11.7 8.4A5 5 0 0 1 2.4 7.6" fill="none" stroke="#6e6e6e" stroke-width="1.8"/><path d="M0.5 1.2L0.8 6.3L5.2 5.2Z M13.5 11.8L13.2 6.7L8.8 7.8Z" fill="#6e6e6e"/></svg>
<svg style="position:absolute;left:1172px;top:102px;" width="11" height="11" viewBox="0 0 11 11"><path d="M0.8 0.8L10.2 10.2M10.2 0.8L0.8 10.2" stroke="#6e6e6e" stroke-width="1.9"/></svg>
<svg style="position:absolute;left:1196px;top:100px;" width="14" height="14" viewBox="0 0 14 14"><circle cx="7" cy="7" r="6" fill="none" stroke="#6e6e6e" stroke-width="1.9"/><path d="M7 1V5M7 9V13M1 7H5M9 7H13" stroke="#6e6e6e" stroke-width="2"/></svg>
<div style="position:absolute;left:1230px;top:58px;width:1px;height:960px;background:#c9c9c9"></div>
<div style="position:absolute;left:526px;top:128px;width:704px;height:884px;background:#fff"></div>
<div style="position:absolute;left:526px;top:648px;width:704px;height:364px;background:#eefae7"></div>
<div style="position:absolute;left:526px;top:127px;width:704px;height:1px;background:#e2dfdb"></div>
<div style="position:absolute;left:526px;top:128px;width:704px;height:20px;background:#2675bf"></div>
<svg style="position:absolute;left:533px;top:135px;" width="10" height="6" viewBox="0 0 10 6"><path d="M0.8 0.8L5 4.8L9.2 0.8" fill="none" stroke="#ffffff" stroke-width="1.2"/></svg>
<svg style="position:absolute;left:551px;top:131px;" width="16" height="15" viewBox="0 0 16 15"><path d="M6.5 1H12V8H2V5.5H6.5Z" fill="#c9d1d7"/><path d="M2 5L6 1V5Z" fill="#9fb3c6"/><rect x="0" y="9" width="15" height="6" fill="#f2c06e"/><text x="7.5" y="14.6" font-size="7" text-anchor="middle" fill="#4a3a20" font-family="Liberation Sans" font-weight="bold" letter-spacing="-0.3">SFTP</text></svg>
<div class="t" style="left:569px;top:129px;height:20px;line-height:20px;font-size:13px;color:#fff;letter-spacing:-0.3px">001 (120.220.102.25)</div>
<svg style="position:absolute;left:552px;top:153px;" width="6" height="10" viewBox="0 0 6 10"><path d="M0.8 0.8L4.8 5L0.8 9.2" fill="none" stroke="#808080" stroke-width="1.2"/></svg>
<svg style="position:absolute;left:569px;top:152px;" width="14" height="11" viewBox="0 0 14 11"><path d="M0 0H5.5L7 2H14V11H0Z" fill="#aab5bd"/></svg>
<div class="t" style="left:587px;top:149px;height:20px;line-height:20px;font-size:13px;color:#3420f8">bin</div>
<svg style="position:absolute;left:552px;top:173px;" width="6" height="10" viewBox="0 0 6 10"><path d="M0.8 0.8L4.8 5L0.8 9.2" fill="none" stroke="#808080" stroke-width="1.2"/></svg>
<svg style="position:absolute;left:569px;top:172px;" width="14" height="11" viewBox="0 0 14 11"><path d="M0 0H5.5L7 2H14V11H0Z" fill="#aab5bd"/></svg>
<div class="t" style="left:587px;top:169px;height:20px;line-height:20px;font-size:13px;color:#000">boot</div>
<svg style="position:absolute;left:552px;top:193px;" width="6" height="10" viewBox="0 0 6 10"><path d="M0.8 0.8L4.8 5L0.8 9.2" fill="none" stroke="#808080" stroke-width="1.2"/></svg>
<svg style="position:absolute;left:569px;top:192px;" width="14" height="11" viewBox="0 0 14 11"><path d="M0 0H5.5L7 2H14V11H0Z" fill="#aab5bd"/></svg>
<div class="t" style="left:587px;top:189px;height:20px;line-height:20px;font-size:13px;color:#000">code-server-4.103.2-linux-amd64</div>
<svg style="position:absolute;left:552px;top:213px;" width="6" height="10" viewBox="0 0 6 10"><path d="M0.8 0.8L4.8 5L0.8 9.2" fill="none" stroke="#808080" stroke-width="1.2"/></svg>
<svg style="position:absolute;left:569px;top:212px;" width="14" height="11" viewBox="0 0 14 11"><path d="M0 0H5.5L7 2H14V11H0Z" fill="#aab5bd"/></svg>
<div class="t" style="left:587px;top:209px;height:20px;line-height:20px;font-size:13px;color:#000">dev</div>
<svg style="position:absolute;left:552px;top:233px;" width="6" height="10" viewBox="0 0 6 10"><path d="M0.8 0.8L4.8 5L0.8 9.2" fill="none" stroke="#808080" stroke-width="1.2"/></svg>
<svg style="position:absolute;left:569px;top:232px;" width="14" height="11" viewBox="0 0 14 11"><path d="M0 0H5.5L7 2H14V11H0Z" fill="#aab5bd"/></svg>
<div class="t" style="left:587px;top:229px;height:20px;line-height:20px;font-size:13px;color:#000">etc</div>
<svg style="position:absolute;left:552px;top:253px;" width="6" height="10" viewBox="0 0 6 10"><path d="M0.8 0.8L4.8 5L0.8 9.2" fill="none" stroke="#808080" stroke-width="1.2"/></svg>
<svg style="position:absolute;left:569px;top:252px;" width="14" height="11" viewBox="0 0 14 11"><path d="M0 0H5.5L7 2H14V11H0Z" fill="#aab5bd"/></svg>
<div class="t" style="left:587px;top:249px;height:20px;line-height:20px;font-size:13px;color:#000">home</div>
<svg style="position:absolute;left:552px;top:273px;" width="6" height="10" viewBox="0 0 6 10"><path d="M0.8 0.8L4.8 5L0.8 9.2" fill="none" stroke="#808080" stroke-width="1.2"/></svg>
<svg style="position:absolute;left:569px;top:272px;" width="14" height="11" viewBox="0 0 14 11"><path d="M0 0H5.5L7 2H14V11H0Z" fill="#aab5bd"/></svg>
<div class="t" style="left:587px;top:269px;height:20px;line-height:20px;font-size:13px;color:#3420f8">lib</div>
<svg style="position:absolute;left:552px;top:293px;" width="6" height="10" viewBox="0 0 6 10"><path d="M0.8 0.8L4.8 5L0.8 9.2" fill="none" stroke="#808080" stroke-width="1.2"/></svg>
<svg style="position:absolute;left:569px;top:292px;" width="14" height="11" viewBox="0 0 14 11"><path d="M0 0H5.5L7 2H14V11H0Z" fill="#aab5bd"/></svg>
<div class="t" style="left:587px;top:289px;height:20px;line-height:20px;font-size:13px;color:#3420f8">lib32</div>
<svg style="position:absolute;left:552px;top:313px;" width="6" height="10" viewBox="0 0 6 10"><path d="M0.8 0.8L4.8 5L0.8 9.2" fill="none" stroke="#808080" stroke-width="1.2"/></svg>
<svg style="position:absolute;left:569px;top:312px;" width="14" height="11" viewBox="0 0 14 11"><path d="M0 0H5.5L7 2H14V11H0Z" fill="#aab5bd"/></svg>
<div class="t" style="left:587px;top:309px;height:20px;line-height:20px;font-size:13px;color:#3420f8">lib64</div>
<svg style="position:absolute;left:552px;top:333px;" width="6" height="10" viewBox="0 0 6 10"><path d="M0.8 0.8L4.8 5L0.8 9.2" fill="none" stroke="#808080" stroke-width="1.2"/></svg>
<svg style="position:absolute;left:569px;top:332px;" width="14" height="11" viewBox="0 0 14 11"><path d="M0 0H5.5L7 2H14V11H0Z" fill="#aab5bd"/></svg>
<div class="t" style="left:587px;top:329px;height:20px;line-height:20px;font-size:13px;color:#3420f8">libx32</div>
<svg style="position:absolute;left:552px;top:353px;" width="6" height="10" viewBox="0 0 6 10"><path d="M0.8 0.8L4.8 5L0.8 9.2" fill="none" stroke="#808080" stroke-width="1.2"/></svg>
<svg style="position:absolute;left:569px;top:352px;" width="14" height="11" viewBox="0 0 14 11"><path d="M0 0H5.5L7 2H14V11H0Z" fill="#aab5bd"/></svg>
<div class="t" style="left:587px;top:349px;height:20px;line-height:20px;font-size:13px;color:#000">LLaMA-Factory</div>
<svg style="position:absolute;left:552px;top:373px;" width="6" height="10" viewBox="0 0 6 10"><path d="M0.8 0.8L4.8 5L0.8 9.2" fill="none" stroke="#808080" stroke-width="1.2"/></svg>
<svg style="position:absolute;left:569px;top:372px;" width="14" height="11" viewBox="0 0 14 11"><path d="M0 0H5.5L7 2H14V11H0Z" fill="#aab5bd"/></svg>
<div class="t" style="left:587px;top:369px;height:20px;line-height:20px;font-size:13px;color:#000">media</div>
<svg style="position:absolute;left:552px;top:393px;" width="6" height="10" viewBox="0 0 6 10"><path d="M0.8 0.8L4.8 5L0.8 9.2" fill="none" stroke="#808080" stroke-width="1.2"/></svg>
<svg style="position:absolute;left:569px;top:392px;" width="14" height="11" viewBox="0 0 14 11"><path d="M0 0H5.5L7 2H14V11H0Z" fill="#aab5bd"/></svg>
<div class="t" style="left:587px;top:389px;height:20px;line-height:20px;font-size:13px;color:#000">mnt</div>
<svg style="position:absolute;left:552px;top:413px;" width="6" height="10" viewBox="0 0 6 10"><path d="M0.8 0.8L4.8 5L0.8 9.2" fill="none" stroke="#808080" stroke-width="1.2"/></svg>
<svg style="position:absolute;left:569px;top:412px;" width="14" height="11" viewBox="0 0 14 11"><path d="M0 0H5.5L7 2H14V11H0Z" fill="#aab5bd"/></svg>
<div class="t" style="left:587px;top:409px;height:20px;line-height:20px;font-size:13px;color:#000">opt</div>
<svg style="position:absolute;left:552px;top:433px;" width="6" height="10" viewBox="0 0 6 10"><path d="M0.8 0.8L4.8 5L0.8 9.2" fill="none" stroke="#808080" stroke-width="1.2"/></svg>
<svg style="position:absolute;left:569px;top:432px;" width="14" height="11" viewBox="0 0 14 11"><path d="M0 0H5.5L7 2H14V11H0Z" fill="#aab5bd"/></svg>
<div class="t" style="left:587px;top:429px;height:20px;line-height:20px;font-size:13px;color:#000">proc</div>
<svg style="position:absolute;left:552px;top:453px;" width="6" height="10" viewBox="0 0 6 10"><path d="M0.8 0.8L4.8 5L0.8 9.2" fill="none" stroke="#808080" stroke-width="1.2"/></svg>
<svg style="position:absolute;left:569px;top:452px;" width="14" height="11" viewBox="0 0 14 11"><path d="M0 0H5.5L7 2H14V11H0Z" fill="#aab5bd"/></svg>
<div class="t" style="left:587px;top:449px;height:20px;line-height:20px;font-size:13px;color:#3420f8">root</div>
<svg style="position:absolute;left:552px;top:473px;" width="6" height="10" viewBox="0 0 6 10"><path d="M0.8 0.8L4.8 5L0.8 9.2" fill="none" stroke="#808080" stroke-width="1.2"/></svg>
<svg style="position:absolute;left:569px;top:472px;" width="14" height="11" viewBox="0 0 14 11"><path d="M0 0H5.5L7 2H14V11H0Z" fill="#aab5bd"/></svg>
<div class="t" style="left:587px;top:469px;height:20px;line-height:20px;font-size:13px;color:#000">run</div>
<svg style="position:absolute;left:552px;top:493px;" width="6" height="10" viewBox="0 0 6 10"><path d="M0.8 0.8L4.8 5L0.8 9.2" fill="none" stroke="#808080" stroke-width="1.2"/></svg>
<svg style="position:absolute;left:569px;top:492px;" width="14" height="11" viewBox="0 0 14 11"><path d="M0 0H5.5L7 2H14V11H0Z" fill="#aab5bd"/></svg>
<div class="t" style="left:587px;top:489px;height:20px;line-height:20px;font-size:13px;color:#3420f8">sbin</div>
<svg style="position:absolute;left:552px;top:513px;" width="6" height="10" viewBox="0 0 6 10"><path d="M0.8 0.8L4.8 5L0.8 9.2" fill="none" stroke="#808080" stroke-width="1.2"/></svg>
<svg style="position:absolute;left:569px;top:512px;" width="14" height="11" viewBox="0 0 14 11"><path d="M0 0H5.5L7 2H14V11H0Z" fill="#aab5bd"/></svg>
<div class="t" style="left:587px;top:509px;height:20px;line-height:20px;font-size:13px;color:#000">shared-only</div>
<svg style="position:absolute;left:552px;top:533px;" width="6" height="10" viewBox="0 0 6 10"><path d="M0.8 0.8L4.8 5L0.8 9.2" fill="none" stroke="#808080" stroke-width="1.2"/></svg>
<svg style="position:absolute;left:569px;top:532px;" width="14" height="11" viewBox="0 0 14 11"><path d="M0 0H5.5L7 2H14V11H0Z" fill="#aab5bd"/></svg>
<div class="t" style="left:587px;top:529px;height:20px;line-height:20px;font-size:13px;color:#000">spack</div>
<svg style="position:absolute;left:552px;top:553px;" width="6" height="10" viewBox="0 0 6 10"><path d="M0.8 0.8L4.8 5L0.8 9.2" fill="none" stroke="#808080" stroke-width="1.2"/></svg>
<svg style="position:absolute;left:569px;top:552px;" width="14" height="11" viewBox="0 0 14 11"><path d="M0 0H5.5L7 2H14V11H0Z" fill="#aab5bd"/></svg>
<div class="t" style="left:587px;top:549px;height:20px;line-height:20px;font-size:13px;color:#000">srv</div>
<svg style="position:absolute;left:552px;top:573px;" width="6" height="10" viewBox="0 0 6 10"><path d="M0.8 0.8L4.8 5L0.8 9.2" fill="none" stroke="#808080" stroke-width="1.2"/></svg>
<svg style="position:absolute;left:569px;top:572px;" width="14" height="11" viewBox="0 0 14 11"><path d="M0 0H5.5L7 2H14V11H0Z" fill="#aab5bd"/></svg>
<div class="t" style="left:587px;top:569px;height:20px;line-height:20px;font-size:13px;color:#000">sys</div>
<svg style="position:absolute;left:552px;top:593px;" width="6" height="10" viewBox="0 0 6 10"><path d="M0.8 0.8L4.8 5L0.8 9.2" fill="none" stroke="#808080" stroke-width="1.2"/></svg>
<svg style="position:absolute;left:569px;top:592px;" width="14" height="11" viewBox="0 0 14 11"><path d="M0 0H5.5L7 2H14V11H0Z" fill="#aab5bd"/></svg>
<div class="t" style="left:587px;top:589px;height:20px;line-height:20px;font-size:13px;color:#000">tmp</div>
<svg style="position:absolute;left:552px;top:613px;" width="6" height="10" viewBox="0 0 6 10"><path d="M0.8 0.8L4.8 5L0.8 9.2" fill="none" stroke="#808080" stroke-width="1.2"/></svg>
<svg style="position:absolute;left:569px;top:612px;" width="14" height="11" viewBox="0 0 14 11"><path d="M0 0H5.5L7 2H14V11H0Z" fill="#aab5bd"/></svg>
<div class="t" style="left:587px;top:609px;height:20px;line-height:20px;font-size:13px;color:#000">usr</div>
<svg style="position:absolute;left:552px;top:633px;" width="6" height="10" viewBox="0 0 6 10"><path d="M0.8 0.8L4.8 5L0.8 9.2" fill="none" stroke="#808080" stroke-width="1.2"/></svg>
<svg style="position:absolute;left:569px;top:632px;" width="14" height="11" viewBox="0 0 14 11"><path d="M0 0H5.5L7 2H14V11H0Z" fill="#aab5bd"/></svg>
<div class="t" style="left:587px;top:629px;height:20px;line-height:20px;font-size:13px;color:#000">var</div>
<svg style="position:absolute;left:551px;top:655px;" width="10" height="6" viewBox="0 0 10 6"><path d="M0.8 0.8L5 4.8L9.2 0.8" fill="none" stroke="#808080" stroke-width="1.2"/></svg>
<svg style="position:absolute;left:569px;top:652px;" width="14" height="11" viewBox="0 0 14 11"><path d="M0 0H5.5L7 2H14V11H0Z" fill="#aab5bd"/></svg>
<div class="t" style="left:587px;top:649px;height:20px;line-height:20px;font-size:13px">workspace</div>
<svg style="position:absolute;left:570px;top:673px;" width="6" height="10" viewBox="0 0 6 10"><path d="M0.8 0.8L4.8 5L0.8 9.2" fill="none" stroke="#808080" stroke-width="1.2"/></svg>
<svg style="position:absolute;left:587px;top:672px;" width="14" height="11" viewBox="0 0 14 11"><path d="M0 0H5.5L7 2H14V11H0Z" fill="#aab5bd"/></svg>
<div class="t" style="left:605px;top:669px;height:20px;line-height:20px;font-size:13px">.cache</div>
<svg style="position:absolute;left:570px;top:693px;" width="6" height="10" viewBox="0 0 6 10"><path d="M0.8 0.8L4.8 5L0.8 9.2" fill="none" stroke="#808080" stroke-width="1.2"/></svg>
<svg style="position:absolute;left:587px;top:692px;" width="14" height="11" viewBox="0 0 14 11"><path d="M0 0H5.5L7 2H14V11H0Z" fill="#aab5bd"/></svg>
<div class="t" style="left:605px;top:689px;height:20px;line-height:20px;font-size:13px">.conda</div>
<svg style="position:absolute;left:570px;top:713px;" width="6" height="10" viewBox="0 0 6 10"><path d="M0.8 0.8L4.8 5L0.8 9.2" fill="none" stroke="#808080" stroke-width="1.2"/></svg>
<svg style="position:absolute;left:587px;top:712px;" width="14" height="11" viewBox="0 0 14 11"><path d="M0 0H5.5L7 2H14V11H0Z" fill="#aab5bd"/></svg>
<div class="t" style="left:605px;top:709px;height:20px;line-height:20px;font-size:13px">.config</div>
<svg style="position:absolute;left:570px;top:733px;" width="6" height="10" viewBox="0 0 6 10"><path d="M0.8 0.8L4.8 5L0.8 9.2" fill="none" stroke="#808080" stroke-width="1.2"/></svg>
<svg style="position:absolute;left:587px;top:732px;" width="14" height="11" viewBox="0 0 14 11"><path d="M0 0H5.5L7 2H14V11H0Z" fill="#aab5bd"/></svg>
<div class="t" style="left:605px;top:729px;height:20px;line-height:20px;font-size:13px">.dotnet</div>
<svg style="position:absolute;left:570px;top:753px;" width="6" height="10" viewBox="0 0 6 10"><path d="M0.8 0.8L4.8 5L0.8 9.2" fill="none" stroke="#808080" stroke-width="1.2"/></svg>
<svg style="position:absolute;left:587px;top:752px;" width="14" height="11" viewBox="0 0 14 11"><path d="M0 0H5.5L7 2H14V11H0Z" fill="#aab5bd"/></svg>
<div class="t" style="left:605px;top:749px;height:20px;line-height:20px;font-size:13px">.ipynb_checkpoints</div>
<svg style="position:absolute;left:570px;top:773px;" width="6" height="10" viewBox="0 0 6 10"><path d="M0.8 0.8L4.8 5L0.8 9.2" fill="none" stroke="#808080" stroke-width="1.2"/></svg>
<svg style="position:absolute;left:587px;top:772px;" width="14" height="11" viewBox="0 0 14 11"><path d="M0 0H5.5L7 2H14V11H0Z" fill="#aab5bd"/></svg>
<div class="t" style="left:605px;top:769px;height:20px;line-height:20px;font-size:13px">.ipython</div>
<svg style="position:absolute;left:570px;top:793px;" width="6" height="10" viewBox="0 0 6 10"><path d="M0.8 0.8L4.8 5L0.8 9.2" fill="none" stroke="#808080" stroke-width="1.2"/></svg>
<svg style="position:absolute;left:587px;top:792px;" width="14" height="11" viewBox="0 0 14 11"><path d="M0 0H5.5L7 2H14V11H0Z" fill="#aab5bd"/></svg>
<div class="t" style="left:605px;top:789px;height:20px;line-height:20px;font-size:13px">.java</div>
<svg style="position:absolute;left:570px;top:813px;" width="6" height="10" viewBox="0 0 6 10"><path d="M0.8 0.8L4.8 5L0.8 9.2" fill="none" stroke="#808080" stroke-width="1.2"/></svg>
<svg style="position:absolute;left:587px;top:812px;" width="14" height="11" viewBox="0 0 14 11"><path d="M0 0H5.5L7 2H14V11H0Z" fill="#aab5bd"/></svg>
<div class="t" style="left:605px;top:809px;height:20px;line-height:20px;font-size:13px">.jupyter</div>
<svg style="position:absolute;left:570px;top:833px;" width="6" height="10" viewBox="0 0 6 10"><path d="M0.8 0.8L4.8 5L0.8 9.2" fill="none" stroke="#808080" stroke-width="1.2"/></svg>
<svg style="position:absolute;left:587px;top:832px;" width="14" height="11" viewBox="0 0 14 11"><path d="M0 0H5.5L7 2H14V11H0Z" fill="#aab5bd"/></svg>
<div class="t" style="left:605px;top:829px;height:20px;line-height:20px;font-size:13px">.local</div>
<svg style="position:absolute;left:570px;top:853px;" width="6" height="10" viewBox="0 0 6 10"><path d="M0.8 0.8L4.8 5L0.8 9.2" fill="none" stroke="#808080" stroke-width="1.2"/></svg>
<svg style="position:absolute;left:587px;top:852px;" width="14" height="11" viewBox="0 0 14 11"><path d="M0 0H5.5L7 2H14V11H0Z" fill="#aab5bd"/></svg>
<div class="t" style="left:605px;top:849px;height:20px;line-height:20px;font-size:13px">.nv</div>
<svg style="position:absolute;left:570px;top:873px;" width="6" height="10" viewBox="0 0 6 10"><path d="M0.8 0.8L4.8 5L0.8 9.2" fill="none" stroke="#808080" stroke-width="1.2"/></svg>
<svg style="position:absolute;left:587px;top:872px;" width="14" height="11" viewBox="0 0 14 11"><path d="M0 0H5.5L7 2H14V11H0Z" fill="#aab5bd"/></svg>
<div class="t" style="left:605px;top:869px;height:20px;line-height:20px;font-size:13px">.ollama</div>
<svg style="position:absolute;left:570px;top:893px;" width="6" height="10" viewBox="0 0 6 10"><path d="M0.8 0.8L4.8 5L0.8 9.2" fill="none" stroke="#808080" stroke-width="1.2"/></svg>
<svg style="position:absolute;left:587px;top:892px;" width="14" height="11" viewBox="0 0 14 11"><path d="M0 0H5.5L7 2H14V11H0Z" fill="#aab5bd"/></svg>
<div class="t" style="left:605px;top:889px;height:20px;line-height:20px;font-size:13px">.pycharm_helpers</div>
<svg style="position:absolute;left:570px;top:913px;" width="6" height="10" viewBox="0 0 6 10"><path d="M0.8 0.8L4.8 5L0.8 9.2" fill="none" stroke="#808080" stroke-width="1.2"/></svg>
<svg style="position:absolute;left:587px;top:912px;" width="14" height="11" viewBox="0 0 14 11"><path d="M0 0H5.5L7 2H14V11H0Z" fill="#aab5bd"/></svg>
<div class="t" style="left:605px;top:909px;height:20px;line-height:20px;font-size:13px">.ssh</div>
<svg style="position:absolute;left:570px;top:933px;" width="6" height="10" viewBox="0 0 6 10"><path d="M0.8 0.8L4.8 5L0.8 9.2" fill="none" stroke="#808080" stroke-width="1.2"/></svg>
<svg style="position:absolute;left:587px;top:932px;" width="14" height="11" viewBox="0 0 14 11"><path d="M0 0H5.5L7 2H14V11H0Z" fill="#aab5bd"/></svg>
<div class="t" style="left:605px;top:929px;height:20px;line-height:20px;font-size:13px">.swanlab</div>
<svg style="position:absolute;left:570px;top:953px;" width="6" height="10" viewBox="0 0 6 10"><path d="M0.8 0.8L4.8 5L0.8 9.2" fill="none" stroke="#808080" stroke-width="1.2"/></svg>
<svg style="position:absolute;left:587px;top:952px;" width="14" height="11" viewBox="0 0 14 11"><path d="M0 0H5.5L7 2H14V11H0Z" fill="#aab5bd"/></svg>
<div class="t" style="left:605px;top:949px;height:20px;line-height:20px;font-size:13px">.Trash-0</div>
<svg style="position:absolute;left:570px;top:973px;" width="6" height="10" viewBox="0 0 6 10"><path d="M0.8 0.8L4.8 5L0.8 9.2" fill="none" stroke="#808080" stroke-width="1.2"/></svg>
<svg style="position:absolute;left:587px;top:972px;" width="14" height="11" viewBox="0 0 14 11"><path d="M0 0H5.5L7 2H14V11H0Z" fill="#aab5bd"/></svg>
<div class="t" style="left:605px;top:969px;height:20px;line-height:20px;font-size:13px">.triton</div>
<svg style="position:absolute;left:570px;top:993px;" width="6" height="10" viewBox="0 0 6 10"><path d="M0.8 0.8L4.8 5L0.8 9.2" fill="none" stroke="#808080" stroke-width="1.2"/></svg>
<svg style="position:absolute;left:587px;top:992px;" width="14" height="11" viewBox="0 0 14 11"><path d="M0 0H5.5L7 2H14V11H0Z" fill="#aab5bd"/></svg>
<div class="t" style="left:605px;top:989px;height:20px;line-height:20px;font-size:13px">.vscode-server</div>
<div style="position:absolute;left:1220px;top:128px;width:10px;height:528px;background:rgba(0,0,0,0.12)"></div>
<div style="position:absolute;left:1231px;top:59px;width:22px;height:959px;background:#f2f2f2"></div>
<svg style="position:absolute;left:1232px;top:72px;" width="18" height="12" viewBox="0 0 18 12"><path d="M6.3 1.3L1.9 5.6L6.3 9.9L9 7.2M9 4.1L11.7 1.3L16.1 5.6L11.7 9.9" fill="none" stroke="#000" stroke-width="1.8"/></svg>
<div class="t" style="left:1248px;top:89px;height:15px;line-height:15px;font-size:12px;transform-origin:0 0;transform:rotate(90deg)"><span style="letter-spacing:-0.7px">CodeGeeX</span></div>
<svg style="position:absolute;left:1236px;top:165px;" width="11" height="12" viewBox="0 0 11 12"><g fill="#6e6e6e"><ellipse cx="5.5" cy="2" rx="5.5" ry="2"/><path d="M0 4.3Q5.5 7.6 11 4.3V5.6Q5.5 8.9 0 5.6Z M0 7.3Q5.5 10.6 11 7.3V8.6Q5.5 11.9 0 8.6Z M0 10.1Q5.5 13.2 11 10.1V10.6Q5.5 13.6 0 10.6Z"/></g></svg>
<div class="t" style="left:1248px;top:182px;height:15px;line-height:15px;font-size:12px;transform-origin:0 0;transform:rotate(90deg)"><span style="letter-spacing:-0.3px">Database</span></div>
<svg style="position:absolute;left:1236px;top:253px;" width="11" height="9" viewBox="0 0 11 9"><g fill="#5e5e5e"><rect x="0" y="0" width="2" height="2"/><rect x="3.2" y="0" width="4.8" height="2"/><rect x="9" y="0" width="2" height="2"/><rect x="0" y="3.2" width="2" height="2.6"/><rect x="3.2" y="3.2" width="4.8" height="2.6"/><rect x="9" y="3.2" width="2" height="2.6"/><rect x="0" y="7" width="2" height="2"/><rect x="3.2" y="7" width="4.8" height="2"/><rect x="9" y="7" width="2" height="2"/></g></svg>
<div class="t" style="left:1248px;top:268px;height:15px;line-height:15px;font-size:12px;transform-origin:0 0;transform:rotate(90deg)">SciView</div>
<svg style="position:absolute;left:1235px;top:331px;" width="14" height="13" viewBox="0 0 14 13"><path d="M2.3 5.3A2.6 2.6 0 1 1 7 3.2A2.6 2.6 0 1 1 11.6 4.8" fill="none" stroke="#6e6e6e" stroke-width="1.3"/><path d="M1.2 6.5Q-0.2 10 2.5 11.3Q4 12 5.5 12.3" fill="none" stroke="#6e6e6e" stroke-width="1.6"/><path d="M6.8 7.5Q6.8 5.8 8.5 5.8H11.8Q13.5 5.8 13.5 7.5V9.8Q13.5 11.4 11.8 11.4H11.3L10.3 12.6L9.5 11.4H8.5Q6.8 11.4 6.8 9.8Z" fill="#6e6e6e"/></svg>
<div class="t" style="left:1248px;top:347px;height:15px;line-height:15px;font-size:12px;transform-origin:0 0;transform:rotate(90deg)">GitHub Copilot Chat</div>
<svg style="position:absolute;left:1235px;top:479px;" width="14" height="14" viewBox="0 0 14 14"><path d="M6.3 1.2Q3 1.5 2.5 5.5L2 9.5L1 10.6H12L11.2 9.5L10.8 7.2Q8 7 7.8 4Q7.7 2.2 8.4 1.5Q7.5 1.1 6.3 1.2Z" fill="#6e6e6e"/><path d="M4.6 11.5H8.4Q8 13.3 6.5 13.3Q5 13.3 4.6 11.5Z" fill="#6e6e6e"/><circle cx="10.6" cy="3.3" r="2.5" fill="#db5860"/></svg>
<div class="t" style="left:1248px;top:496px;height:15px;line-height:15px;font-size:12px;transform-origin:0 0;transform:rotate(90deg)"><span style="letter-spacing:0.3px">Notifications</span></div>
<div style="position:absolute;left:522px;top:114px;width:655px;height:897px;border:3px solid #ff8000"></div>
</body></html>
